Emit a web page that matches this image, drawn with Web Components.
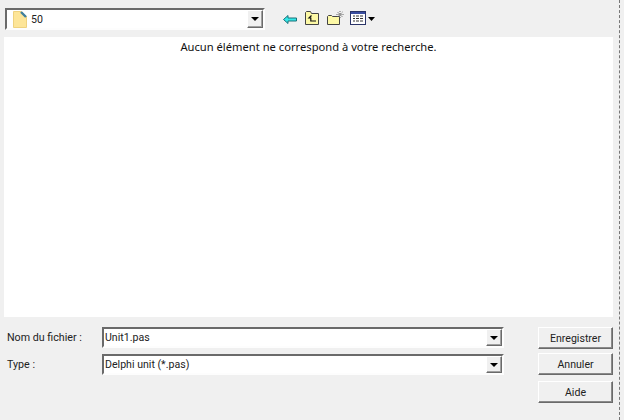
<!DOCTYPE html>
<html>
<head>
<meta charset="utf-8">
<style>
  html, body { margin: 0; padding: 0; background: #f0f0f0; }
  body { font-family: "Liberation Sans", Arial, sans-serif; font-size: 12px; color: #111; overflow: hidden; }
</style>
</head>
<body>
<file-dialog>
  <dlg-combo slot="path" style="width:260px;height:22px">
    <svg slot="icon" width="15" height="17" viewBox="0 0 15 17">
      <path d="M.5 .5h8l5 5v11H.5z" fill="#fde598" stroke="#efd27e"/>
      <path d="M8 1l5 5" stroke="#3f7f9f" stroke-width="2.400"/>
    </svg>
    50
  </dlg-combo>
  <dlg-toolbar slot="tools"></dlg-toolbar>
  <file-list slot="list">Aucun élément ne correspond à votre recherche.</file-list>
  <field-row slot="name" label="Nom du fichier :"><dlg-combo style="width:402px;height:21px">Unit1.pas</dlg-combo></field-row>
  <field-row slot="type" label="Type :"><dlg-combo style="width:402px;height:21px">Delphi unit (*.pas)</dlg-combo></field-row>
  <dlg-button slot="ok">Enregistrer</dlg-button>
  <dlg-button slot="cancel">Annuler</dlg-button>
  <dlg-button slot="help" style="margin-top:2px">Aide</dlg-button>
</file-dialog>

<script>
class FileDialog extends HTMLElement {
  constructor () {
    super()
    this.attachShadow({ mode: 'open' }).innerHTML = /*html*/`
    <style>
      :host { display: block; width: 624px; height: 420px; box-sizing: border-box; }
      .main {
        width: 620px; height: 420px; box-sizing: border-box;
        border-right: 1px dashed #777;
        display: flex; flex-direction: column;
      }
      .top { display: flex; align-items: center; gap: 18px; padding: 8px 0 0 5px; height: 22px; }
      .list { margin: 7px 6px 0 4px; }
      .bottom { display: flex; justify-content: space-between; padding: 10px 7px 0 7px; }
      .fields { display: flex; flex-direction: column; gap: 6px; }
      .buttons { display: flex; flex-direction: column; gap: 4px; margin-right: -1px; }
    </style>
    <div class="main">
      <div class="top"><slot name="path"></slot><slot name="tools"></slot></div>
      <div class="list"><slot name="list"></slot></div>
      <div class="bottom">
        <div class="fields"><slot name="name"></slot><slot name="type"></slot></div>
        <div class="buttons"><slot name="ok"></slot><slot name="cancel"></slot><slot name="help"></slot></div>
      </div>
    </div>`
  }
}

class DlgCombo extends HTMLElement {
  constructor () {
    super()
    this.attachShadow({ mode: 'open' }).innerHTML = /*html*/`
    <style>
      :host {
        display: flex; box-sizing: border-box; align-items: center;
        background: #fff;
        border: 2px solid; border-color: #6a6a6a #fdfdfd #fdfdfd #6a6a6a;
        font: 10.6px Roboto, "Liberation Sans", sans-serif; color: #222;
      }
      .text { flex: 1; display: flex; align-items: center; gap: 3px; padding-left: 1px; height: 100%; overflow: hidden; white-space: nowrap; }
      .text ::slotted(svg) { margin-left: 5px; flex: none; }
      .btn {
        width: 16px; height: 100%; box-sizing: border-box; flex: none;
        background: #f0f0f0;
        border: 1px solid; border-color: #fff #6a6a6a #6a6a6a #fff;
        box-shadow: inset -1px -1px 0 #a0a0a0;
        display: flex; align-items: center; justify-content: center;
      }
      .btn i { width: 0; height: 0; border: 4px solid transparent; border-top: 4px solid #000; border-bottom: 0; }
    </style>
    <div class="text"><slot name="icon"></slot><span><slot></slot></span></div>
    <div class="btn"><i></i></div>`
  }
}

class DlgToolbar extends HTMLElement {
  constructor () {
    super()
    this.attachShadow({ mode: 'open' }).innerHTML = /*html*/`
    <style>
      :host { display: flex; align-items: center; height: 22px; }
      svg { display: block; flex: none; }
    </style>
    <svg width="14" height="9" viewBox="0 0 14 9">
      <path d="M.5 4.500L5 .5V3h8.500v3H5v2.500z" fill="#35e8e8" stroke="#1a7078"/>
    </svg>
    <svg width="14" height="14" viewBox="0 0 14 14" style="margin-left:8px;margin-top:-2px">
      <path d="M.5 13.500V1.500l1-1h4l1 2h7v11z" fill="#fdf9a6" stroke="#444"/>
      <path d="M6.500 4.500L4 7h1.800v3H11" fill="none" stroke="#111" stroke-width="1.200"/>
    </svg>
    <svg width="17" height="14" viewBox="0 0 17 14" style="margin-left:8px;margin-top:-2px">
      <path d="M.5 13.500V5.500l1-1h3l1 1h7v8z" fill="#fdf9a6" stroke="#444"/>
      <path d="M13 0v7M9.500 3.500h7M10.500 1l5 5M15.500 1l-5 5" stroke="#666" stroke-width="1" stroke-dasharray="1 1"/>
    </svg>
    <svg width="16" height="14" viewBox="0 0 16 14" style="margin-left:6px;margin-top:-2px">
      <rect x=".5" y=".5" width="15" height="13" fill="#fff" stroke="#2a3468"/>
      <rect x="1" y="1" width="14" height="2" fill="#3a4ea0"/>
      <path d="M3 5h2M6 5h3M10 5h3M3 7.500h2M6 7.500h3M10 7.500h3M3 10h2M6 10h3M10 10h3" stroke="#333" stroke-width="1.200"/>
    </svg>
    <svg width="7" height="4" viewBox="0 0 7 4" style="margin-left:2px;margin-top:-1px">
      <path d="M0 0h7L3.500 4z" fill="#000"/>
    </svg>`
  }
}

class FileList extends HTMLElement {
  constructor () {
    super()
    this.attachShadow({ mode: 'open' }).innerHTML = /*html*/`
    <style>
      :host {
        display: block; height: 280px; background: #fff; box-sizing: border-box;
        text-align: center; font: 11.2px "Noto Sans", sans-serif; padding-top: 2px; color: #111;
      }
    </style>
    <slot></slot>`
  }
}

class FieldRow extends HTMLElement {
  constructor () {
    super()
    this.attachShadow({ mode: 'open' }).innerHTML = /*html*/`
    <style>
      :host { display: flex; align-items: center; font: 10.7px Roboto, "Liberation Sans", sans-serif; color: #222; }
      .label { width: 95px; }
    </style>
    <span class="label"></span><slot></slot>`
    this.shadowRoot.querySelector('.label').textContent = this.getAttribute('label')
  }
}

class DlgButton extends HTMLElement {
  constructor () {
    super()
    this.attachShadow({ mode: 'open' }).innerHTML = /*html*/`
    <style>
      :host {
        display: flex; align-items: center; justify-content: center;
        width: 75px; height: 22px; box-sizing: border-box;
        background: #f0f0f0; font: 10.6px Roboto, "Liberation Sans", sans-serif; color: #222;
        border: 1px solid; border-color: #fff #6a6a6a #6a6a6a #fff;
        box-shadow: inset -1px -1px 0 #8a8a8a;
      }
    </style>
    <slot></slot>`
  }
}

customElements.define('file-dialog', FileDialog)
customElements.define('dlg-combo', DlgCombo)
customElements.define('dlg-toolbar', DlgToolbar)
customElements.define('file-list', FileList)
customElements.define('field-row', FieldRow)
customElements.define('dlg-button', DlgButton)
</script>
</body>
</html>
